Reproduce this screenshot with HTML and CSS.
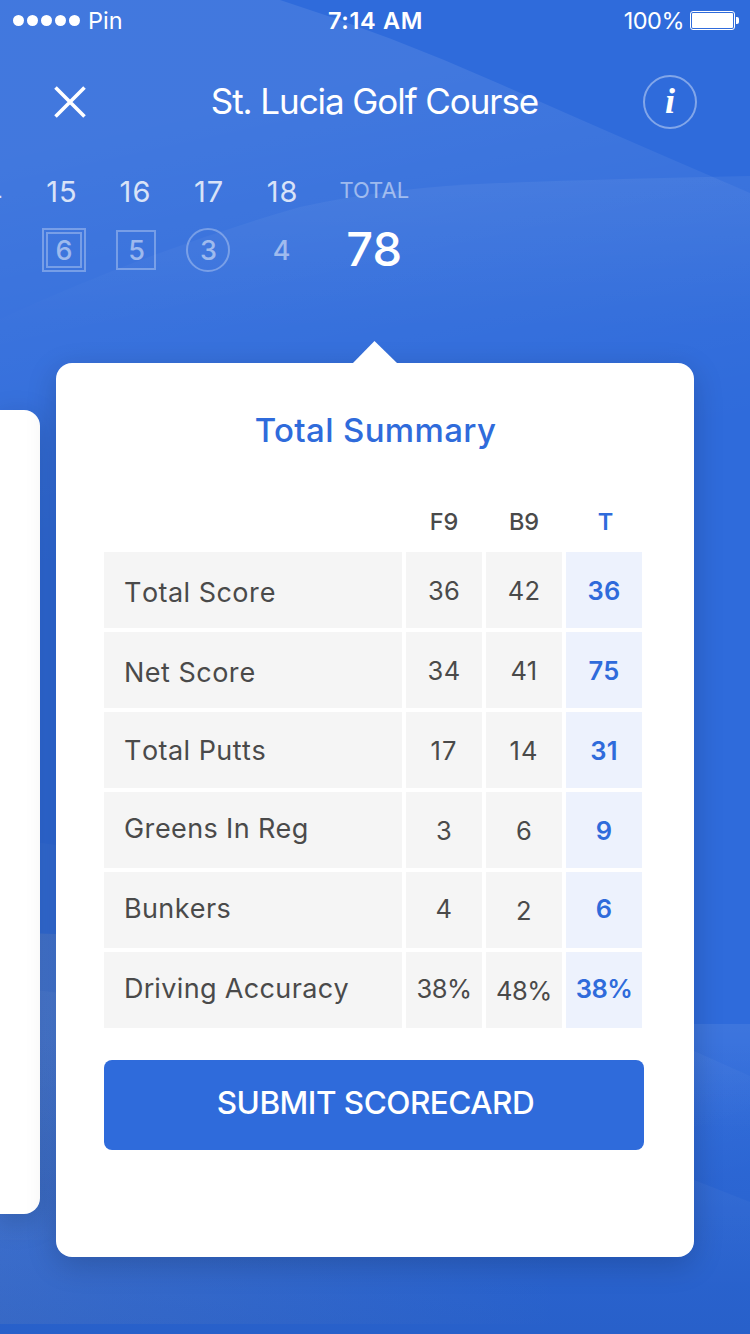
FILE: index.html
```html
<!DOCTYPE html>
<html lang="en">
<head>
<meta charset="utf-8">
<title>St. Lucia Golf Course</title>
<link rel="stylesheet" href="styles.css">
</head>
<body>
<div class="screen">
  <svg class="backdrop" viewBox="0 0 750 1334" aria-hidden="true">
    <defs>
      <linearGradient id="sky" gradientUnits="userSpaceOnUse" x1="300" y1="90" x2="390" y2="500">
        <stop offset="0" stop-color="#fff" stop-opacity=".09"/>
        <stop offset="1" stop-color="#fff" stop-opacity="0"/>
      </linearGradient>
      <linearGradient id="hill" gradientUnits="userSpaceOnUse" x1="0" y1="180" x2="0" y2="330">
        <stop offset="0" stop-color="#fff" stop-opacity=".055"/>
        <stop offset="1" stop-color="#fff" stop-opacity="0"/>
      </linearGradient>
      <linearGradient id="ground" gradientUnits="userSpaceOnUse" x1="0" y1="0" x2="560" y2="0">
        <stop offset="0" stop-color="#b4b4b4" stop-opacity=".15"/>
        <stop offset="1" stop-color="#b4b4b4" stop-opacity="0"/>
      </linearGradient>
      <linearGradient id="ridge" gradientUnits="userSpaceOnUse" x1="0" y1="986" x2="0" y2="1200">
        <stop offset="0" stop-color="#fff" stop-opacity=".035"/>
        <stop offset="1" stop-color="#fff" stop-opacity="0"/>
      </linearGradient>
      <linearGradient id="shade" gradientUnits="userSpaceOnUse" x1="0" y1="1040" x2="0" y2="1334">
        <stop offset="0" stop-color="#123f96" stop-opacity="0"/>
        <stop offset="1" stop-color="#123f96" stop-opacity=".25"/>
      </linearGradient>
      <linearGradient id="right" gradientUnits="userSpaceOnUse" x1="0" y1="1024" x2="0" y2="1130">
        <stop offset="0" stop-color="#fff" stop-opacity=".07"/>
        <stop offset="1" stop-color="#fff" stop-opacity="0"/>
      </linearGradient>
      <linearGradient id="slope" gradientUnits="userSpaceOnUse" x1="690" y1="1060" x2="730" y2="1180">
        <stop offset="0" stop-color="#fff" stop-opacity=".035"/>
        <stop offset="1" stop-color="#fff" stop-opacity="0"/>
      </linearGradient>
      <linearGradient id="slope2" gradientUnits="userSpaceOnUse" x1="0" y1="1180" x2="0" y2="1290">
        <stop offset="0" stop-color="#fff" stop-opacity=".04"/>
        <stop offset="1" stop-color="#fff" stop-opacity="0"/>
      </linearGradient>
    </defs>
    <path fill="url(#sky)" d="M0 0H280Q390 35 500 84T750 193V560H0Z"/>
    <path fill="url(#hill)" d="M0 319Q150 250 300 207Q390 187 500 183T750 176V340H0Z"/>
    <path fill="#fff" fill-opacity=".025" d="M0 837L375 890V1240H0Z"/>
    <path fill="url(#ground)" d="M0 932L80 935L560 1100V1324H0Z"/>
    <path fill="url(#ridge)" d="M0 986L375 1030V1200H0Z"/>
    <path fill="url(#right)" d="M640 1024H750V1334H640Z"/>
    <path fill="url(#slope)" d="M640 1030L694 1051L750 1076V1200H640Z"/>
    <path fill="url(#slope2)" d="M640 1160L694 1180L750 1202V1334H640Z"/>
    <path fill="url(#shade)" d="M0 1040H750V1334H0Z"/>
  </svg>

  <div class="statusbar">
    <div class="carrier">
      <span class="dots"><i></i><i></i><i></i><i></i><i></i></span>
      <span class="carrier-name">Pin</span>
    </div>
    <div class="clock">7:14 AM</div>
    <div class="power">
      <span class="percent">100%</span>
      <svg width="49" height="19" viewBox="0 0 49 19"><rect x=".5" y=".5" width="44" height="18" rx="2.5" fill="none" stroke="#fff"/><rect x="2" y="2" width="41" height="15" rx="1" fill="#fff"/><path d="M46 6h1a2 2 0 0 1 2 2v3a2 2 0 0 1-2 2h-1z" fill="#fff"/></svg>
    </div>
  </div>

  <header class="header">
    <svg class="close" width="32" height="32" viewBox="0 0 32 32"><path d="M1.5 1.5l29 29M30.500 1.500l-29 29" stroke="#fff" stroke-width="3.600" fill="none"/></svg>
    <h1 class="course">St. Lucia Golf Course</h1>
    <div class="info"><span>i</span></div>
  </header>

  <div class="holes">
    <div class="hole first"><span class="number">14</span><span class="score"></span></div>
    <div class="hole"><span class="number">15</span><span class="score double"><b>6</b></span></div>
    <div class="hole"><span class="number">16</span><span class="score square">5</span></div>
    <div class="hole"><span class="number">17</span><span class="score circle">3</span></div>
    <div class="hole"><span class="number">18</span><span class="score plain">4</span></div>
    <div class="hole total"><span class="label">TOTAL</span><span class="sum">78</span></div>
  </div>

  <div class="carousel">
    <div class="card previous"></div>
    <section class="card summary">
      <svg class="pointer" width="46" height="23" viewBox="0 0 46 23"><path d="M0 23L22.500 0L46 23Z" fill="#fff"/></svg>
      <h2 class="summary-title">Total Summary</h2>
      <div class="stats">
        <div class="head"></div><div class="head">F9</div><div class="head">B9</div><div class="head tot">T</div>
        <div class="name down wide">Total Score</div><div class="cell">36</div><div class="cell">42</div><div class="cell tot">36</div>
        <div class="name down wide">Net Score</div><div class="cell">34</div><div class="cell">41</div><div class="cell tot">75</div>
        <div class="name wide">Total Putts</div><div class="cell ones">17</div><div class="cell ones">14</div><div class="cell tot">31</div>
        <div class="name up">Greens In Reg</div><div class="cell">3</div><div class="cell">6</div><div class="cell tot">9</div>
        <div class="name up">Bunkers</div><div class="cell up">4</div><div class="cell">2</div><div class="cell tot up">6</div>
        <div class="name up">Driving Accuracy</div><div class="cell up percentage">38%</div><div class="cell percentage">48%</div><div class="cell tot up percentage">38%</div>
      </div>
      <button class="submit">SUBMIT SCORECARD</button>
    </section>
  </div>
</div>
</body>
</html>
```

FILE: styles.css
```css
* { box-sizing: border-box; }
body { margin: 0; }
.screen {
  position: relative;
  width: 750px;
  height: 1334px;
  overflow: hidden;
  background: #2f6bdb;
  color: #fff;
  font-family: Inter, "Liberation Sans", sans-serif;
  display: flex;
  flex-direction: column;
  isolation: isolate;
}
.backdrop { position: absolute; inset: 0; width: 750px; height: 1334px; z-index: -1; }

.statusbar {
  height: 41px;
  padding: 0 11px 0 13px;
  display: grid;
  grid-template-columns: 1fr auto 1fr;
  align-items: center;
  font-size: 23.500px;
  line-height: 41px;
}
.carrier { display: flex; align-items: center; gap: 8px; }
.dots { display: flex; gap: 3px; }
.dots i { width: 11px; height: 11px; border-radius: 50%; background: #fff; }
.clock { padding-right: 1px; font-weight: 600; letter-spacing: 0.650px; }
.power { display: flex; align-items: center; justify-content: flex-end; gap: 6px; }
.percent { letter-spacing: -0.500px; }

.header {
  height: 122px;
  padding: 0 53px 0 54px;
  display: grid;
  grid-template-columns: 54px 1fr 54px;
  align-items: center;
}
.course {
  margin: 0 0 2px;
  padding-right: 2px;
  text-align: center;
  font-size: 35px;
  line-height: 44px;
  font-weight: 400;
  letter-spacing: -1.080px;
}
.info {
  width: 54px;
  height: 54px;
  border: 2px solid rgba(255,255,255,.4);
  border-radius: 50%;
  display: flex;
  justify-content: center;
  font: italic bold 36px/49px "Liberation Serif", serif;
}

.holes { display: flex; height: 200px; margin-left: -48.250px; padding-top: 9px; }
.hole { flex: none; width: 73.500px; display: flex; flex-direction: column; align-items: center; }
.number { font-size: 29px; line-height: 40px; opacity: .8; letter-spacing: 1px; }
.first .number { margin-right: 2px; }
.score {
  width: 44px;
  height: 44px;
  margin-top: 16px;
  display: flex;
  align-items: center;
  justify-content: center;
  font-size: 27px;
  font-weight: 500;
  color: rgba(255,255,255,.5);
}
.double { border: 2px solid rgba(255,255,255,.3); padding: 2px; margin-left: 3px; }
.double b { width: 36px; height: 36px; border: 2px solid rgba(255,255,255,.3); padding-left: 1px; font-weight: 500; text-align: center; line-height: 34px; }
.square { width: 40px; height: 40px; margin: 18px 0 2px; padding-left: 2px; border: 2px solid rgba(255,255,255,.3); }
.circle { margin-right: 2px; padding-left: 1px; border: 2px solid rgba(255,255,255,.3); border-radius: 50%; }
.plain { padding-right: 2px; }
.total { width: 110px; }
.label { font-size: 22px; line-height: 36px; opacity: .5; }
.sum { margin-top: 11px; font-size: 47px; line-height: 60px; font-weight: 500; }

.carousel { display: flex; gap: 16px; }
.card { flex: none; background: #fff; box-shadow: 0 8px 30px rgba(0,0,0,.18); }
.previous { width: 40px; height: 804px; margin-top: 47px; border-radius: 0 16px 16px 0; }
.summary { position: relative; width: 638px; height: 894px; padding: 47px 48px 0; border-radius: 16px; color: #4a4a4a; }
.pointer { position: absolute; left: 296px; top: -22px; }
.summary-title {
  margin: 0;
  height: 40px;
  padding-left: 1px;
  text-align: center;
  color: #2f6bdb;
  font-size: 33px;
  line-height: 40px;
  font-weight: 500;
  letter-spacing: 0.350px;
}
.stats {
  margin-top: 42px;
  display: grid;
  grid-template-columns: 298px 76px 76px 76px;
  grid-template-rows: 56px repeat(6, 76px);
  gap: 4px;
}
.head { text-align: center; font-size: 23.500px; line-height: 60px; font-weight: 500; }
.head.tot { padding-left: 3px; font-weight: 600; }
.name, .cell { display: flex; align-items: center; background: #f5f5f5; }
.name { padding-left: 20px; font-size: 27px; letter-spacing: 0.350px; font-kerning: none; }
.wide { letter-spacing: 0.480px; }
.cell { justify-content: center; font-size: 25.500px; letter-spacing: 0.300px; }
.ones { letter-spacing: 1px; }
.percentage { letter-spacing: -0.500px; }
.tot { color: #2f6bdb; }
.cell.tot { background: #edf2fd; font-weight: 560; }
.down { padding-top: 4px; }
.up { padding-bottom: 4px; }
.submit {
  display: block;
  width: 540px;
  height: 90px;
  margin: 32px 0 0;
  padding: 0 0 4px 3px;
  border: 0;
  border-radius: 8px;
  background: #2f6bdb;
  color: #fff;
  font: 450 31.500px/40px Inter, "Liberation Sans", sans-serif;
  letter-spacing: -0.500px;
}
```
